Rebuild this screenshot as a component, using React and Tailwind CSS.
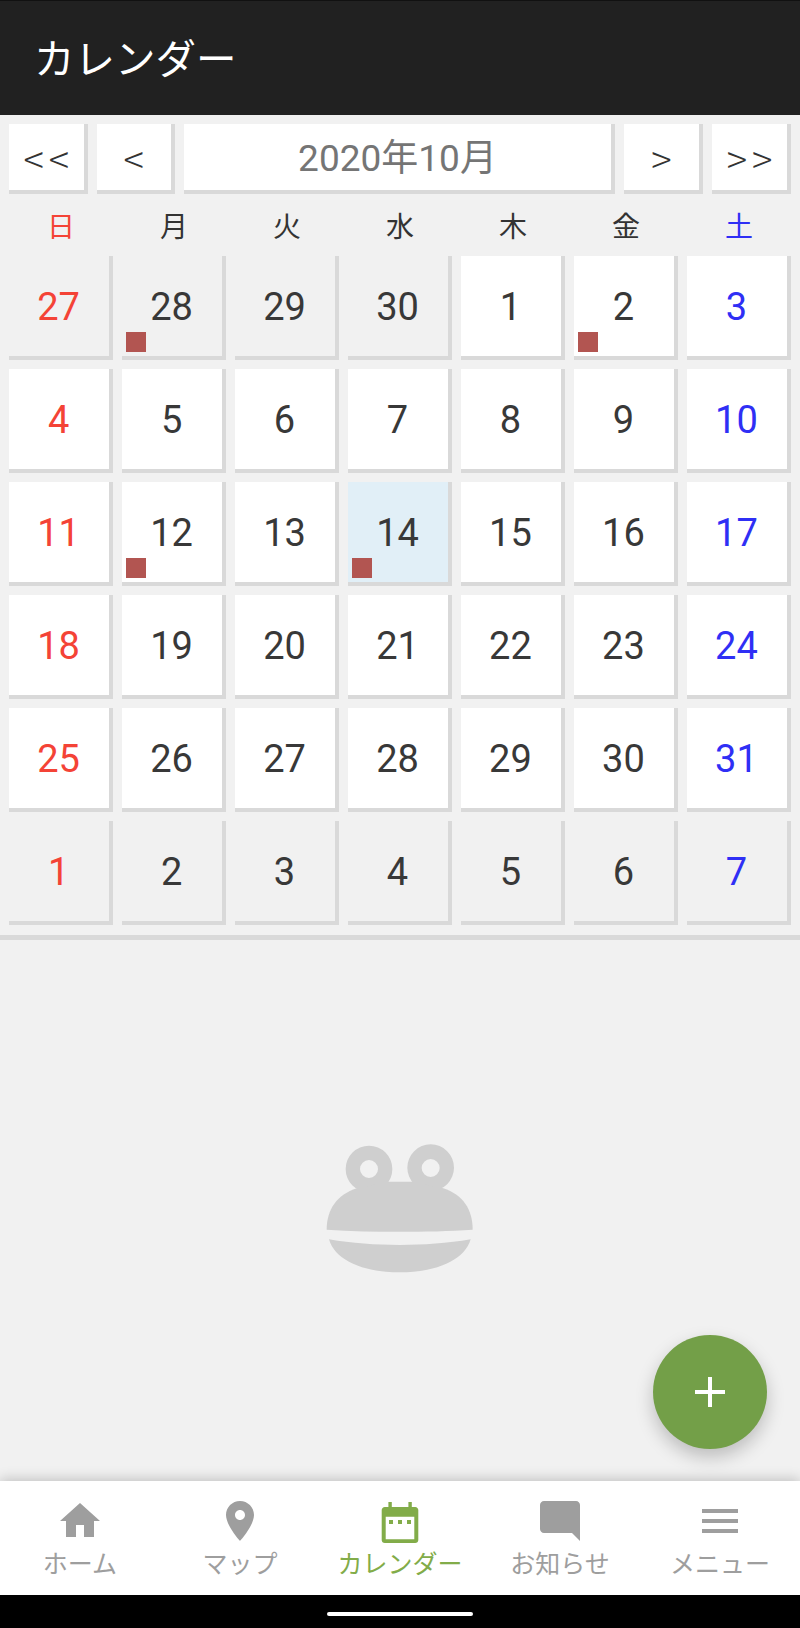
import React from 'react';

const jp = "font-['Roboto','Noto_Sans_CJK_JP',sans-serif]";

const week = [
  { label: '日', color: 'text-[#f44336]' },
  { label: '月', color: 'text-[#333333]' },
  { label: '火', color: 'text-[#333333]' },
  { label: '水', color: 'text-[#333333]' },
  { label: '木', color: 'text-[#333333]' },
  { label: '金', color: 'text-[#333333]' },
  { label: '土', color: 'text-[#2f2ff5]' },
];

// previous month tail, october, next month head
const days = [
  ...[27, 28, 29, 30].map((d) => ({ d, off: true })),
  ...Array.from({ length: 31 }, (_, i) => ({ d: i + 1, off: false })),
  ...[1, 2, 3, 4, 5, 6, 7].map((d) => ({ d, off: true })),
];

const markers = [1, 5, 15, 17];
const selected = 17;

const dayColor = (i) => {
  if (i % 7 === 0) return 'text-[#f44336]';
  if (i % 7 === 6) return 'text-[#2f2ff5]';
  return 'text-[#383838]';
};

const NavButton = ({ children, className }) => (
  <button className={`h-[70px] bg-white border-r-[4px] border-b-[4px] border-[#d9d9d9] text-[#333333] flex items-center justify-center ${className}`}>
    {children}
  </button>
);

const HomeIcon = () => (
  <svg width="48" height="48" viewBox="0 0 24 24" fill="currentColor">
    <path d="M10 20v-6h4v6h5v-8h3L12 3 2 12h3v8z" />
  </svg>
);

const PlaceIcon = () => (
  <svg width="48" height="48" viewBox="0 0 24 24" fill="currentColor">
    <path d="M12 2C8.130 2 5 5.130 5 9c0 5.250 7 13 7 13s7-7.750 7-13c0-3.870-3.130-7-7-7zm0 9.500c-1.380 0-2.500-1.120-2.500-2.500s1.120-2.500 2.500-2.500 2.500 1.120 2.500 2.500-1.120 2.500-2.500 2.500z" />
  </svg>
);

const CalendarIcon = () => (
  <svg width="48" height="48" viewBox="0 0 24 24" fill="currentColor">
    <path fillRule="evenodd" d="M6.200 2.500h1.700V5h8.300V2.500h1.700V5h1.700c.9 0 1.550.7 1.550 1.550v14.900c0 .85-.65 1.550-1.550 1.550H4.400c-.9 0-1.550-.7-1.550-1.550V6.550C2.850 5.700 3.500 5 4.400 5h1.800zM4.850 9.850v11.300h14.300V9.850z" />
    <rect x="6.500" y="11.500" width="2" height="2" />
    <rect x="11" y="11.500" width="2" height="2" />
    <rect x="15.500" y="11.500" width="2" height="2" />
  </svg>
);

const ChatIcon = () => (
  <svg width="48" height="48" viewBox="0 0 24 24" fill="currentColor">
    <path d="M4 2h16c1.100 0 2 .9 2 2v18l-4-4H4c-1.100 0-2-.9-2-2V4c0-1.100.9-2 2-2z" />
  </svg>
);

const MenuIcon = () => (
  <svg width="48" height="48" viewBox="0 0 24 24" fill="currentColor">
    <path d="M3 18h18v-2H3v2zm0-5h18v-2H3v2zm0-7v2h18V6H3z" />
  </svg>
);

const Frog = () => (
  <svg width="200" height="160" viewBox="0 0 600 480" fill="#cfcfcf">
    <path
      fillRule="evenodd"
      d="M207 77a70 70 0 1 0 0 140a70 70 0 1 0 0-140zM207 120a27 27 0 1 1 0 54a27 27 0 1 1 0-54z"
    />
    <path
      fillRule="evenodd"
      d="M392 73a70 70 0 1 0 0 140a70 70 0 1 0 0-140zM392 117a27 27 0 1 1 0 54a27 27 0 1 1 0-54z"
    />
    <path d="M80 329C80 268 112 224 170 205L265 185H335L430 205C488 224 518 268 518 329C450 334 370 335 299 335S150 334 80 329Z" />
    <path d="M87 358C155 370 228 375 299 375S443 370 512 358C494 420 412 457 299 457S105 420 87 358Z" />
  </svg>
);

const tabs = [
  { label: 'ホーム', icon: <HomeIcon /> },
  { label: 'マップ', icon: <PlaceIcon /> },
  { label: 'カレンダー', icon: <CalendarIcon />, active: true },
  { label: 'お知らせ', icon: <ChatIcon /> },
  { label: 'メニュー', icon: <MenuIcon /> },
];

const arrow = "font-['Noto_Sans_CJK_JP',sans-serif] text-[38px] font-light";

export default function App() {
  return (
    <div className={`relative w-[800px] h-[1628px] flex flex-col bg-[#f1f1f1] overflow-hidden ${jp}`}>
      {/* Header */}
      <header className="h-[114.500px] shrink-0 bg-[#212121] border-t border-[#111111] flex items-center pl-[34px] pt-[5px]">
        <h1 className="text-[40.500px] font-normal leading-none text-white">カレンダー</h1>
      </header>

      {/* Month navigation */}
      <div className="flex px-[9px] pt-[9.500px] gap-[9px]">
        <NavButton className={`w-[78.500px] shrink-0 tracking-[5px] pl-[5px] ${arrow}`}>&lt;&lt;</NavButton>
        <NavButton className={`w-[78.500px] shrink-0 ${arrow}`}>&lt;</NavButton>
        <NavButton className="flex-1 text-[37px] pt-[3px] !text-[#757575]">2020年10月</NavButton>
        <NavButton className={`w-[79px] shrink-0 ${arrow}`}>&gt;</NavButton>
        <NavButton className={`w-[79px] shrink-0 tracking-[5px] pl-[5px] ${arrow}`}>&gt;&gt;</NavButton>
      </div>

      {/* Weekday labels */}
      <div className="grid grid-cols-7 gap-x-[8.800px] px-[9px] h-[62px] items-center">
        {week.map((w) => (
          <div key={w.label} className={`text-center text-[28px] leading-none pt-[6px] ${w.color}`}>
            {w.label}
          </div>
        ))}
      </div>

      {/* Days */}
      <div className="grid grid-cols-7 gap-x-[8.800px] gap-y-[9px] px-[9px]">
        {days.map((day, i) => (
          <div
            key={i}
            className={`relative h-[104px] border-r-[4px] border-b-[4px] border-[#d9d9d9] flex items-center justify-center pt-[1px] pr-[1px] text-[38px] leading-none ${dayColor(i)} ${
              i === selected ? 'bg-[#e1eff7]' : day.off ? 'bg-[#f1f1f1]' : 'bg-white'
            }`}
          >
            {day.d}
            {markers.includes(i) && (
              <span className="absolute left-[4px] bottom-[4px] w-[20px] h-[20px] bg-[#b25551]" />
            )}
          </div>
        ))}
      </div>

      <div className="h-[5px] mt-[10px] shrink-0 bg-[#d9d9d9]" />

      {/* Empty state */}
      <main className="flex-1 flex items-center justify-center pb-[21px]">
        <Frog />
      </main>

      {/* FAB */}
      <button className="absolute left-[653px] top-[1335px] w-[114px] h-[114px] rounded-full bg-[#739f48] shadow-[0_8px_18px_rgba(0,0,0,0.22)] flex items-center justify-center">
        <svg width="30" height="30" viewBox="0 0 30 30" fill="#ffffff">
          <rect x="13" y="0" width="4" height="30" />
          <rect x="0" y="13" width="30" height="4" />
        </svg>
      </button>

      {/* Bottom tabs */}
      <nav className="relative h-[114px] shrink-0 bg-white grid grid-cols-5 shadow-[0_-2px_12px_rgba(0,0,0,0.2)]">
        {tabs.map((t) => (
          <div
            key={t.label}
            className={`flex flex-col items-center pt-[16px] ${t.active ? 'text-[#82ac49]' : 'text-[#9e9e9e]'}`}
          >
            {t.icon}
            <span className="text-[25px] leading-none mt-[7px]">{t.label}</span>
          </div>
        ))}
      </nav>

      {/* System bar */}
      <div className="h-[33px] shrink-0 bg-black flex justify-center pt-[17px]">
        <div className="w-[146px] h-[3.500px] rounded-full bg-white" />
      </div>
    </div>
  );
}
